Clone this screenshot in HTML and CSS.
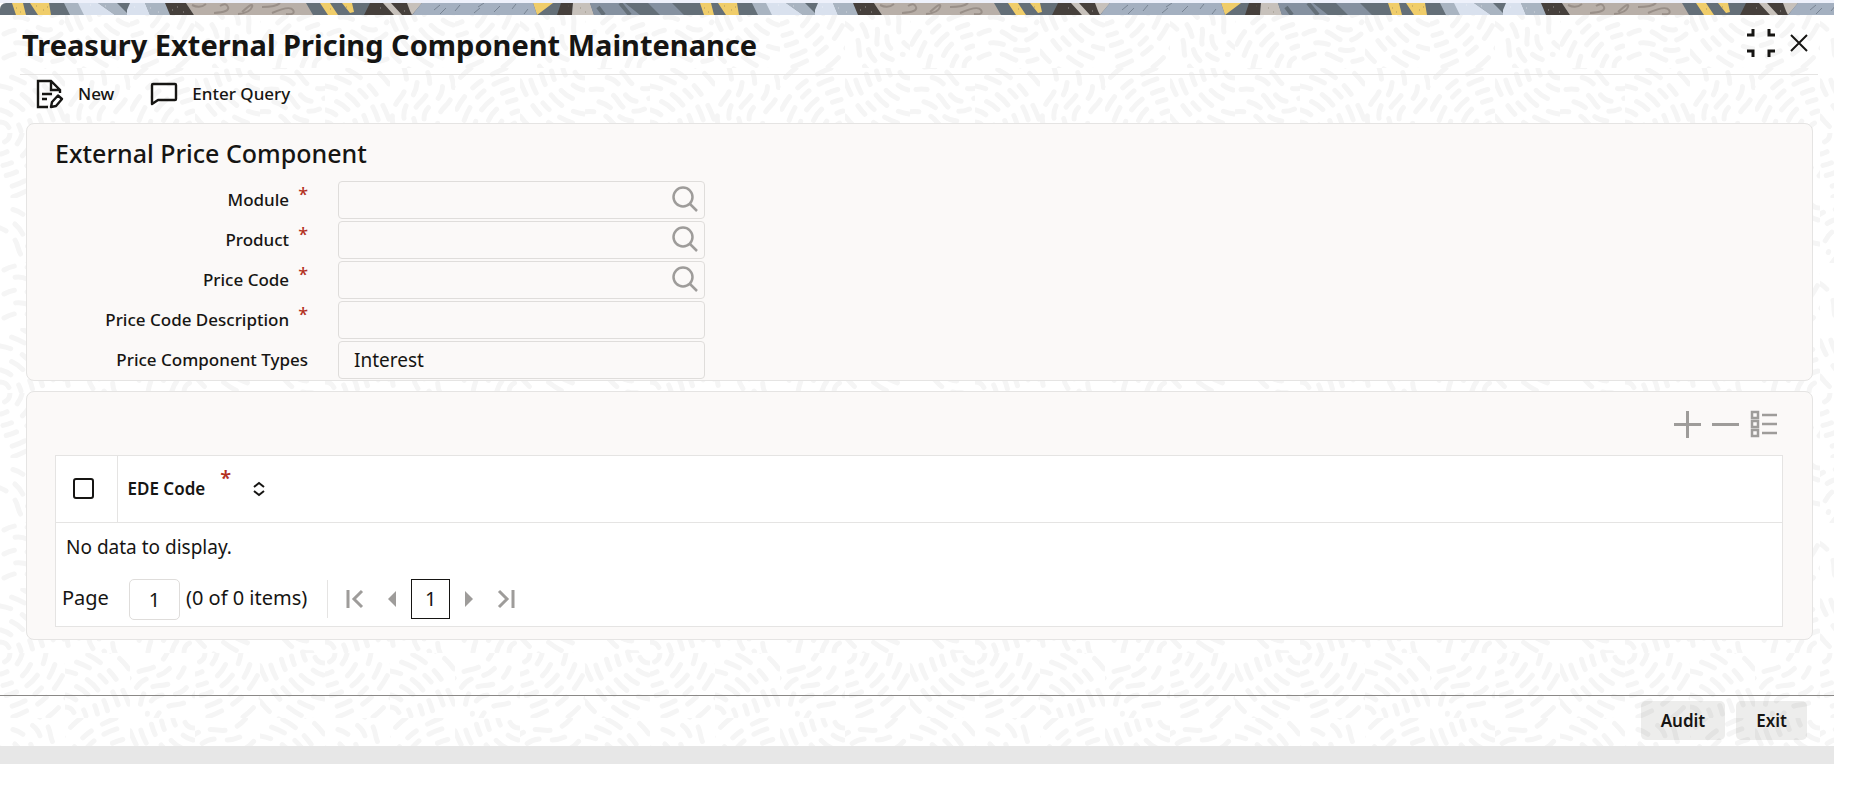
FILE: index.html
```
<!DOCTYPE html>
<html lang="en">
<head>
<meta charset="utf-8">
<title>Treasury External Pricing Component Maintenance</title>
<link rel="stylesheet" href="styles.css">
</head>
<body>
<div class="window">
  <svg class="texture" aria-hidden="true">
    <defs>
      <g id="arcs" fill="none">
        <path d="M10 0A10 10 0 0 1 0 10M22 1Q18 16 1 21M46 0Q40 36 0 44M70 0Q60 52 0 68" stroke-dasharray="11 13 15 12"/>
        <path d="M34 0Q29 28 0 33M58 0Q48 48 0 56M80 0A80 80 0 0 1 0 80" stroke-dasharray="9 12 14 13" stroke-dashoffset="9"/>
      </g>
      <g id="waves" fill="none">
        <path d="M4 7Q20 -2 34 8T62 8M4 31Q20 22 34 33T62 30M4 55Q20 46 34 54T62 56" stroke-dasharray="11 13 15 12"/>
        <path d="M4 19Q20 8 34 21T62 19M4 43Q20 36 34 44T62 42" stroke-dasharray="13 13" stroke-dashoffset="14"/>
      </g>
      <pattern id="dashes" width="325" height="260" patternUnits="userSpaceOnUse">
        <g stroke="#f5f5f5" stroke-width="5" stroke-linecap="round">
          <svg width="65" height="65"><use href="#waves"/></svg>
          <svg x="65" width="65" height="65"><use href="#arcs" transform="rotate(90 32 32)"/></svg>
          <svg x="130" width="65" height="65"><use href="#arcs"/></svg>
          <svg x="195" width="65" height="65"><use href="#waves" transform="rotate(60 32 32)"/></svg>
          <svg x="260" width="65" height="65"><use href="#arcs" transform="rotate(180 32 32)"/></svg>
          <svg y="65" width="65" height="65"><use href="#arcs" transform="rotate(270 32 32)"/></svg>
          <svg x="65" y="65" width="65" height="65"><use href="#waves" transform="rotate(100 32 32)"/></svg>
          <svg x="130" y="65" width="65" height="65"><use href="#arcs" transform="rotate(180 32 32)"/></svg>
          <svg x="195" y="65" width="65" height="65"><use href="#arcs" transform="rotate(90 32 32)"/></svg>
          <svg x="260" y="65" width="65" height="65"><use href="#waves" transform="rotate(20 32 32)"/></svg>
          <svg y="130" width="65" height="65"><use href="#arcs"/></svg>
          <svg x="65" y="130" width="65" height="65"><use href="#arcs" transform="rotate(270 32 32)"/></svg>
          <svg x="130" y="130" width="65" height="65"><use href="#waves" transform="rotate(140 32 32)"/></svg>
          <svg x="195" y="130" width="65" height="65"><use href="#arcs"/></svg>
          <svg x="260" y="130" width="65" height="65"><use href="#arcs" transform="rotate(90 32 32)"/></svg>
          <svg y="195" width="65" height="65"><use href="#waves" transform="rotate(45 32 32)"/></svg>
          <svg x="65" y="195" width="65" height="65"><use href="#arcs" transform="rotate(180 32 32)"/></svg>
          <svg x="130" y="195" width="65" height="65"><use href="#arcs" transform="rotate(90 32 32)"/></svg>
          <svg x="195" y="195" width="65" height="65"><use href="#waves" transform="rotate(160 32 32)"/></svg>
          <svg x="260" y="195" width="65" height="65"><use href="#arcs" transform="rotate(270 32 32)"/></svg>
        </g>
      </pattern>
    </defs>
    <rect width="100%" height="100%" fill="url(#dashes)"/>
  </svg>

  <svg class="ribbon" aria-hidden="true">
    <defs>
      <pattern id="ribbon" width="688" height="12" patternUnits="userSpaceOnUse">
        <path fill="#646f78" d="M0 0H688V12H0Z"/>
        <path fill="#f0cd6a" d="M12 0H23L26 12H16ZM30 0H49L51 12H38ZM320 0H330L338 12H328ZM342 0H352L354 9 350 10ZM533 0H553L537 12Z"/>
        <path fill="#a9b4c1" d="M64 0H82L89 12H70ZM98 0H117L129 12H115ZM145 0H166L171 12H150Z"/>
        <path fill="#d9e1ee" d="M78 0H98L115 12H84ZM130 0H145L150 12H127V7Z"/>
        <path fill="#46403c" d="M165 0H186L194 12H170ZM370 0H410L418 12H364ZM561 0H573L572 12H557Z"/>
        <path fill="#b8afa8" d="M186 0H306L313 12H194Z"/>
        <path fill="#c7c1bb" d="M383 0H391L402 12H394ZM407 0H422L412 12 410 8ZM573 0H590L594 12H572Z"/>
        <path fill="#a4b0c0" d="M422 0H533L537 12H412Z"/>
        <path fill="#8591a0" d="M590 0H625L640 12H594ZM648 0H672L684 12H660Z"/>
        <path fill="none" stroke="#998f88" stroke-width="2" d="M192 2Q200 6 206 1M214 10Q230 9 228 4T220 3M238 11Q250 10 252 4T242 9M262 4Q276 4 280 0M272 10Q290 2 293 7T286 11"/>
        <path fill="none" stroke="#788493" stroke-width="1" d="M434 7L440 2M440 11L446 5M455 8L460 2M474 10L480 5M478 4L484 0M494 9L500 3M512 6L516 1M524 11L528 6"/>
        <path fill="none" stroke="#646f78" stroke-width="4" d="M598 4L604 12M620 0L630 12"/>
        <path fill="none" stroke="#fff" stroke-opacity=".45" d="M90 2H91M150 5H151M158 9H159M177 4H178M183 9H184M172 7H173M134 4H135M105 3H106M380 5H381M404 8H405"/>
        <path fill="none" stroke="#6b6350" stroke-opacity=".5" d="M16 5H17M20 9H21M36 3H37M43 7H44M47 4H48M330 6H331M346 4H347M568 3H569M580 5H581M585 9H586"/>
      </pattern>
    </defs>
    <rect width="100%" height="100%" fill="url(#ribbon)"/>
  </svg>

  <header class="titlebar">
    <h1>Treasury External Pricing Component Maintenance</h1>
    <div class="window-tools">
      <button type="button" aria-label="Restore size"><svg width="28" height="28" viewBox="0 0 28 28" fill="none" stroke="#161513" stroke-width="3"><path d="M0 6H6V0M28 6H22V0M0 22H6V28M28 22H22V28"/></svg></button>
      <button type="button" aria-label="Close"><svg width="18" height="18" viewBox="0 0 18 18" fill="none" stroke="#161513" stroke-width="2"><path d="M1 1L17 17M17 1L1 17"/></svg></button>
    </div>
  </header>

  <nav class="toolbar" aria-label="Actions">
    <button type="button"><svg width="28" height="30" viewBox="0 0 28 30" fill="none" stroke="#161513" stroke-width="2.400"><path d="M12 28H2V2H15L24 11V14M15 2V11H24M6 15H16M6 20H11"/><path d="M15 28L16 23L22 16.500L26 20L20 27Z" stroke-linejoin="round"/></svg>New</button>
    <button type="button"><svg width="28" height="24" viewBox="0 0 28 24" fill="none" stroke="#161513" stroke-width="2.400"><path d="M2 22V3Q2 2 3 2H25Q26 2 26 3V17Q26 18 25 18H8Z" stroke-linejoin="round"/></svg>Enter Query</button>
  </nav>

  <main>
    <section class="panel form-panel">
      <h2>External Price Component</h2>
      <form class="fields">
        <label for="module">Module<span class="req">*</span></label>
        <div class="lov"><input id="module" type="text" required><button type="button" aria-label="Search module"><svg width="28" height="28" viewBox="0 0 28 28" fill="none" stroke="#9e9c9a" stroke-width="2.500"><circle cx="12" cy="12" r="9.500"/><path d="M19 19L26 26"/></svg></button></div>
        <label for="product">Product<span class="req">*</span></label>
        <div class="lov"><input id="product" type="text" required><button type="button" aria-label="Search product"><svg width="28" height="28" viewBox="0 0 28 28" fill="none" stroke="#9e9c9a" stroke-width="2.500"><circle cx="12" cy="12" r="9.500"/><path d="M19 19L26 26"/></svg></button></div>
        <label for="code">Price Code<span class="req">*</span></label>
        <div class="lov"><input id="code" type="text" required><button type="button" aria-label="Search price code"><svg width="28" height="28" viewBox="0 0 28 28" fill="none" stroke="#9e9c9a" stroke-width="2.500"><circle cx="12" cy="12" r="9.500"/><path d="M19 19L26 26"/></svg></button></div>
        <label for="description">Price Code Description<span class="req">*</span></label>
        <div class="lov"><input id="description" type="text" required></div>
        <label for="types">Price Component Types</label>
        <div class="lov"><select id="types"><option>Interest</option></select></div>
      </form>
    </section>

    <section class="panel grid-panel">
      <div class="row-tools">
        <button type="button" aria-label="Add row"><svg width="28" height="28" viewBox="0 0 28 28" stroke="#9e9c9a" stroke-width="3"><path d="M0 14.500H27M13.500 1V28"/></svg></button>
        <button type="button" aria-label="Delete row"><svg width="28" height="28" viewBox="0 0 28 28" stroke="#9e9c9a" stroke-width="3"><path d="M0 14.500H27"/></svg></button>
        <button type="button" aria-label="Single record view"><svg width="28" height="28" viewBox="0 0 28 28" fill="none" stroke="#9e9c9a" stroke-width="2.500"><path d="M2 2H8V8H2ZM2 11H8V17H2ZM2 20H8V26H2ZM12 5H27M12 14H27M12 23H27"/></svg></button>
      </div>
      <div class="grid">
        <table>
          <thead>
            <tr>
              <th class="pick"><input type="checkbox" aria-label="Select all rows"></th>
              <th><div class="head">EDE Code<span class="req">*</span><button type="button" aria-label="Sort by EDE Code"><svg width="12" height="16" viewBox="0 0 12 16" fill="none" stroke="#161513" stroke-width="2"><path d="M1 6L6 2L11 6M1 10L6 14L11 10"/></svg></button></div></th>
            </tr>
          </thead>
          <tbody><tr><td colspan="2">No data to display.</td></tr></tbody>
        </table>
        <div class="pager">
          <label for="page">Page</label>
          <input id="page" type="text" value="1">
          <span>(0 of 0 items)</span>
          <div class="pages">
            <button type="button" aria-label="First page"><svg width="18" height="20" viewBox="0 0 18 20" fill="none" stroke="#9e9c9a" stroke-width="3"><path d="M2 1V19M16 2L8 10L16 18"/></svg></button>
            <button type="button" aria-label="Previous page"><svg width="10" height="16" viewBox="0 0 10 16"><path fill="#9e9c9a" d="M9 0V16L1 8Z"/></svg></button>
            <button type="button" class="current">1</button>
            <button type="button" aria-label="Next page"><svg width="10" height="16" viewBox="0 0 10 16"><path fill="#9e9c9a" d="M1 0V16L9 8Z"/></svg></button>
            <button type="button" aria-label="Last page"><svg width="18" height="20" viewBox="0 0 18 20" fill="none" stroke="#9e9c9a" stroke-width="3"><path d="M16 1V19M2 2L10 10L2 18"/></svg></button>
          </div>
        </div>
      </div>
    </section>
  </main>

  <footer class="actions">
    <button type="button">Audit</button>
    <button type="button">Exit</button>
  </footer>
</div>
</body>
</html>
```

FILE: styles.css
```
* { box-sizing: border-box; }

body {
  margin: 0;
  background: #fff;
  color: #161513;
  font: 17px/24px "Noto Sans", "Open Sans", sans-serif;
}

button, input, select { font: inherit; color: inherit; }
button { padding: 0; border: 0; background: none; cursor: pointer; }
svg { display: block; flex: none; }

.window {
  position: relative;
  isolation: isolate;
  margin-right: 20px;
  border-top: 3px solid #eef1fb;
  border-bottom: 18px solid #e7e7e7;
}

.texture {
  position: absolute;
  inset: 0;
  z-index: -1;
  width: 100%;
  height: 100%;
}

.ribbon { width: 100%; height: 12px; border-top-left-radius: 6px; }

.titlebar {
  display: flex;
  align-items: center;
  justify-content: space-between;
  height: 60px;
  margin: 0 16px 0 20px;
  padding: 0 10px 0 2px;
  border-bottom: 1px solid #e5e4e3;
}

h1 { margin: 0; font-size: 29px; line-height: 40px; font-weight: 700; }
.window-tools { display: flex; align-items: center; gap: 15px; padding-bottom: 3px; }

.toolbar { display: flex; gap: 36px; height: 48px; padding: 0 36px 10px; }
.toolbar button { display: flex; align-items: center; gap: 14px; font-weight: 500; }

main { display: flex; flex-direction: column; gap: 10px; padding: 0 21px 0 26px; }

.panel {
  border: 1px solid #e5e4e3;
  border-radius: 8px;
  background: #fbf9f8;
}

.form-panel { padding: 13px 28px 1px; }
h2 { margin: 0 0 12px; font-size: 25px; line-height: 32px; font-weight: 500; }

.fields {
  display: grid;
  grid-template-columns: 253px 367px;
  gap: 2px 30px;
}

.fields label { display: flex; justify-content: flex-end; align-items: center; font-weight: 500; }

.req { color: #b3311f; }
.fields .req { margin-left: 9px; padding-bottom: 12px; font-size: 18px; }

.lov { display: grid; align-items: center; }
.lov > * { grid-area: 1 / 1; }
.lov button { justify-self: end; margin-right: 6px; padding-bottom: 2px; }

.lov input, .lov select {
  width: 100%;
  height: 38px;
  padding: 0 15px;
  border: 1px solid #dfdddb;
  border-radius: 4px;
  background: transparent;
  appearance: none;
  font-size: 19px;
}

.grid-panel { padding: 18px 29px 12px 28px; }
.row-tools { display: flex; justify-content: flex-end; gap: 10px; padding-right: 5px; margin-bottom: 17px; }

.grid { border: 1px solid #e5e4e3; background: #fff; font-size: 20px; }
table { width: 100%; border-collapse: collapse; }
th { height: 66px; padding: 0 10px; border-bottom: 1px solid #e5e4e3; text-align: left; font-size: 17px; font-weight: 600; }
.pick { width: 61px; padding: 0 17px; border-right: 1px solid #e5e4e3; }

.pick input {
  display: block;
  width: 21px;
  height: 21px;
  margin: 0;
  border: 2px solid #161513;
  border-radius: 3px;
  appearance: none;
}

.head { display: flex; align-items: center; }
.head .req { margin: 0 22px 0 15px; padding-bottom: 22px; font-size: 20px; }
td { height: 50px; padding: 0 10px; font-size: 19px; }

.pager { display: flex; align-items: center; height: 54px; padding: 0 6px; }
.pager label, .pager span { padding-bottom: 2px; }
.pager input {
  width: 51px;
  height: 41px;
  margin: 0 6px 0 20px;
  padding: 0;
  border: 1px solid #dfdddb;
  border-radius: 5px;
  text-align: center;
}

.pages { display: flex; align-items: center; gap: 14px; height: 38px; margin-left: 20px; padding-left: 18px; border-left: 1px solid #e5e4e3; }
.pages button:first-child { margin-right: 9px; }
.pages button:last-child { margin-left: 9px; }
.current { width: 39px; height: 40px; border: 1px solid #161513; }

.actions {
  display: flex;
  justify-content: flex-end;
  gap: 11px;
  margin-top: 55px;
  padding: 5px 27px 6px;
  border-top: 1px solid #8b8987;
}

.actions button {
  height: 39px;
  padding: 0 20px;
  border-radius: 5px;
  background: rgba(22, 21, 19, .08);
  font-weight: 600;
}
```
